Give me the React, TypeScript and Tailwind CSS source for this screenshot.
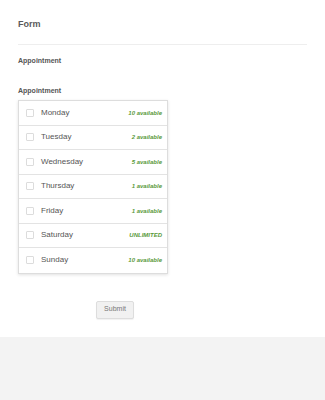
import React from "react";

const days: { name: string; avail: string }[] = [
  { name: "Monday", avail: "10 available" },
  { name: "Tuesday", avail: "2 available" },
  { name: "Wednesday", avail: "5 available" },
  { name: "Thursday", avail: "1 available" },
  { name: "Friday", avail: "1 available" },
  { name: "Saturday", avail: "UNLIMITED" },
  { name: "Sunday", avail: "10 available" },
];

export default function App() {
  return (
    <div
      className="min-h-screen bg-[#f3f3f3]"
      style={{ fontFamily: '"Liberation Sans", Arial, sans-serif' }}
    >
      <div className="h-[337px] bg-white px-[18px] pt-[19px]">
        <h1 className="text-[9px] leading-[11px] font-bold text-[#5a5a5a]">Form</h1>
        <div className="mt-[14px] border-t border-[#eeeeee]" />
        <div className="mt-[12px] text-[7px] leading-[8px] font-bold text-[#555]">Appointment</div>
        <div className="mt-[22px] text-[7px] leading-[8px] font-bold text-[#555]">Appointment</div>
        <div className="mt-[5px] w-[150px] border border-[#dddddd] shadow-[0_1px_3px_rgba(0,0,0,0.12)]">
          {days.map((d, i) => (
            <div
              key={d.name}
              className={`flex h-[24.5px] items-center pl-[7px] pr-[5px] ${
                i < days.length - 1 ? "border-b border-[#e3e3e3]" : ""
              }`}
            >
              <span className="h-[8px] w-[8px] rounded-[1px] border border-[#dcdcdc] bg-white" />
              <span className="ml-[7px] text-[8px] leading-[10px] text-[#555]">{d.name}</span>
              <span className="ml-auto text-[6px] leading-[8px] font-bold italic text-[#5a9a3c]">
                {d.avail}
              </span>
            </div>
          ))}
        </div>
        <button className="mt-[27px] ml-[78px] flex h-[18px] w-[38px] items-center justify-center rounded-[2px] border border-[#dddddd] bg-[#f1f1f1] text-[7px] text-[#777] shadow-[0_1px_1px_rgba(0,0,0,0.06)]">
          Submit
        </button>
      </div>
    </div>
  );
}
